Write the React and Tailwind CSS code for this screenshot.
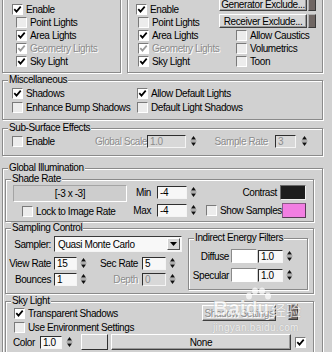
import React from "react";

const BG = "bg-[#d1d1d1]";

function Check({ checked = false, disabled = false }) {
  return (
    <span
      className={
        "flex h-[11px] w-[11px] shrink-0 items-center justify-center border border-t-[#7a7a7a] border-l-[#7a7a7a] border-b-white border-r-white " +
        (checked ? "bg-white" : "bg-[#ececec]")
      }
    >
      {checked && (
        <svg width="9" height="9" viewBox="0 0 9 9">
          <path
            d="M1.3 4.1 L3.5 6.6 L7.7 1.6"
            fill="none"
            stroke={disabled ? "#9a9a9a" : "#000"}
            strokeWidth="1.7"
          />
        </svg>
      )}
    </span>
  );
}

function CheckRow({ label, checked, disabled, className = "" }) {
  return (
    <div className={"flex items-center gap-[3px] whitespace-nowrap " + className}>
      <Check checked={checked} disabled={disabled} />
      <span className={disabled ? "text-[#8c8c8c] [text-shadow:1px_1px_0_#fff]" : ""}>{label}</span>
    </div>
  );
}

function Spinner({ className = "" }) {
  return (
    <svg width="7" height="14" viewBox="0 0 7 14" className={"shrink-0 " + className}>
      <path d="M3.5 2 L1 5.5 L6 5.5 Z" fill="#111" />
      <path d="M0.5 7 H6.5" stroke="#8a8a8a" strokeWidth="1" />
      <path d="M3.5 12 L1 8.5 L6 8.5 Z" fill="#111" />
    </svg>
  );
}

function Field({ value, className = "", disabled = false }) {
  return (
    <div
      className={
        "flex h-[13px] shrink-0 items-center overflow-hidden border border-t-[#2e2e2e] border-l-[#2e2e2e] border-b-[#f4f4f4] border-r-[#f4f4f4] pl-[2px] leading-[11px] " +
        (disabled ? "bg-[#d8d8d8] text-[#8c8c8c]" : "bg-[#f7f7f7]") +
        " " +
        className
      }
    >
      {value}
    </div>
  );
}

function Group({ label, className = "", children }) {
  return (
    <div
      className={
        "shrink-0 border border-[#8a8a8a] shadow-[inset_1px_1px_0_#fff,1px_1px_0_#fff] " + className
      }
    >
      {label && (
        <div className={"-mt-[7px] ml-[5px] h-[12px] w-fit whitespace-nowrap px-[1px] leading-[12px] " + BG}>
          {label}
        </div>
      )}
      {children}
    </div>
  );
}

function Button({ children, className = "", disabled = false }) {
  return (
    <div
      className={
        "flex shrink-0 items-center justify-center whitespace-nowrap border border-t-white border-l-white border-b-[#404040] border-r-[#404040] bg-[#d6d6d6] shadow-[inset_-1px_-1px_0_#9a9a9a] " +
        (disabled ? "text-[#8c8c8c] [text-shadow:1px_1px_0_#fff] " : "") +
        className
      }
    >
      {children}
    </div>
  );
}

function Bar({ className = "" }) {
  return (
    <div
      className={
        "shrink-0 border border-t-[#b0b0b0] border-l-[#b0b0b0] border-b-[#3a3a3a] border-r-[#3a3a3a] bg-[#6f6663] " +
        className
      }
    />
  );
}

export default function App() {
  return (
    <div className="relative flex h-[352px] w-[332px] flex-col overflow-hidden bg-[#d1d1d1] pl-[2px] font-['Liberation_Sans',Arial,sans-serif] text-[10px] leading-[13px] tracking-[-0.4px] text-black">
      {/* top two boxes */}
      <div className="-mt-[8px] flex h-[81px] w-[321px] shrink-0 gap-[6px]">
        <Group className="w-[119px] pt-[10px]">
          <CheckRow label="Enable" checked className="h-[13px] pl-[9px]" />
          <CheckRow label="Point Lights" className="h-[13px] pl-[13px]" />
          <CheckRow label="Area Lights" checked className="h-[13px] pl-[13px]" />
          <CheckRow label="Geometry Lights" checked disabled className="h-[13px] pl-[13px]" />
          <CheckRow label="Sky Light" checked className="h-[13px] pl-[13px]" />
        </Group>
        <Group className="flex w-[196px]">
          <div className="w-[91px] shrink-0 pt-[10px]">
            <CheckRow label="Enable" checked className="h-[13px] pl-[8px]" />
            <CheckRow label="Point Lights" className="h-[13px] pl-[10px]" />
            <CheckRow label="Area Lights" checked className="h-[13px] pl-[10px]" />
            <CheckRow label="Geometry Lights" checked disabled className="h-[13px] pl-[10px]" />
            <CheckRow label="Sky Light" checked className="h-[13px] pl-[10px]" />
          </div>
          <div className="flex flex-col pt-[4px]">
            <div className="flex gap-[1px]">
              <Button className="h-[14px] w-[88px]">Generator Exclude...</Button>
              <Bar className="h-[14px] w-[8px]" />
            </div>
            <div className="mt-[3px] flex gap-[1px]">
              <Button className="h-[14px] w-[88px]">Receiver Exclude...</Button>
              <Bar className="h-[14px] w-[8px]" />
            </div>
            <CheckRow label="Allow Caustics" className="mt-[1px] h-[13px] pl-[17px]" />
            <CheckRow label="Volumetrics" className="h-[13px] pl-[17px]" />
            <CheckRow label="Toon" className="h-[13px] pl-[17px]" />
          </div>
        </Group>
      </div>

      {/* Miscellaneous */}
      <Group label="Miscellaneous" className="mt-[7px] h-[40px] w-[321px]">
        <div className="grid grid-cols-[134px_1fr] grid-rows-[14px_14px]">
          <CheckRow label="Shadows" checked className="pl-[9px]" />
          <CheckRow label="Allow Default Lights" checked />
          <CheckRow label="Enhance Bump Shadows" className="pl-[9px]" />
          <CheckRow label="Default Light Shadows" />
        </div>
      </Group>

      {/* Sub-Surface Effects */}
      <Group label="Sub-Surface Effects" className="mt-[8px] h-[28px] w-[321px]">
        <div className="flex h-[14px] items-center pl-[9px]">
          <CheckRow label="Enable" className="w-[83px]" />
          <span className="w-[49px] whitespace-nowrap text-right text-[#8c8c8c] [text-shadow:1px_1px_0_#fff]">
            Global Scale
          </span>
          <Field value="1.0" disabled className="ml-[3px] w-[39px]" />
          <Spinner className="ml-[4px]" />
          <span className="w-[71px] whitespace-nowrap text-right text-[#8c8c8c] [text-shadow:1px_1px_0_#fff]">
            Sample Rate
          </span>
          <Field value="3" disabled className="ml-[7px] w-[21px]" />
          <Spinner className="ml-[5px]" />
        </div>
      </Group>

      {/* Global Illumination */}
      <Group label="Global Illumination" className="mt-[12px] h-[200px] w-[321px]">
        <div className="flex flex-col pl-[2px]">
          {/* Shade Rate */}
          <Group label="Shade Rate" className="mt-[5px] h-[43px] w-[309px]">
            <div className="flex pl-[7px]">
              <div className="flex w-[114px] shrink-0 flex-col">
                <div className="flex h-[17px] items-center justify-center border border-t-[#a4a4a4] border-l-[#a4a4a4] border-b-white border-r-white bg-[#cdcdcd]">
                  [-3 x -3]
                </div>
                <CheckRow label="Lock to Image Rate" className="mt-[2px] h-[14px] pl-[9px]" />
              </div>
              <div className="ml-[1px] flex shrink-0 flex-col gap-[4px]">
                <div className="flex h-[14px] items-center">
                  <span className="w-[23px] text-right">Min</span>
                  <Field value="-4" className="ml-[6px] w-[30px]" />
                  <Spinner className="ml-[3px]" />
                </div>
                <div className="flex h-[14px] items-center">
                  <span className="w-[23px] text-right">Max</span>
                  <Field value="-4" className="ml-[6px] w-[30px]" />
                  <Spinner className="ml-[3px]" />
                </div>
              </div>
              <div className="ml-[9px] flex w-[100px] shrink-0 flex-col gap-[3px]">
                <div className="flex h-[15px] items-center justify-end gap-[3px]">
                  <span>Contrast</span>
                  <div className="h-[15px] w-[26px] border border-t-[#6a6a6a] border-l-[#6a6a6a] border-b-[#f0f0f0] border-r-[#f0f0f0] bg-[#1d1d1d]" />
                </div>
                <div className="flex h-[15px] items-center justify-between">
                  <CheckRow label="Show Samples" />
                  <div className="h-[15px] w-[26px] border border-t-[#8a5a86] border-l-[#8a5a86] border-b-[#5a3a58] border-r-[#5a3a58] bg-[#f27ee2]" />
                </div>
              </div>
            </div>
          </Group>

          {/* Sampling Control */}
          <Group label="Sampling Control" className="mt-[6px] h-[66px] w-[309px]">
            <div className="flex">
              <div className="flex w-[182px] shrink-0 flex-col">
                <div className="mt-[2px] flex h-[16px] items-center">
                  <span className="w-[45px] text-right">Sampler:</span>
                  <div className="ml-[3px] flex h-[16px] w-[128px] items-center justify-between border border-t-[#3a3a3a] border-l-[#3a3a3a] border-b-[#f4f4f4] border-r-[#f4f4f4] bg-[#f8f8f8] pl-[3px] pr-[1px]">
                    <span className="whitespace-nowrap">Quasi Monte Carlo</span>
                    <div className="flex h-[12px] w-[13px] items-center justify-center border border-t-white border-l-white border-b-[#505050] border-r-[#505050] bg-[#d6d6d6]">
                      <svg width="7" height="4" viewBox="0 0 7 4">
                        <path d="M0 0 H7 L3.5 4 Z" fill="#000" />
                      </svg>
                    </div>
                  </div>
                </div>
                <div className="mt-[4px] flex h-[14px] items-center">
                  <span className="w-[45px] whitespace-nowrap text-right">View Rate</span>
                  <Field value="15" className="ml-[3px] w-[23px]" />
                  <Spinner className="ml-[3px]" />
                  <span className="w-[51px] whitespace-nowrap text-right">Sec Rate</span>
                  <Field value="5" className="ml-[4px] w-[24px]" />
                  <Spinner className="ml-[3px]" />
                </div>
                <div className="mt-[2px] flex h-[14px] items-center">
                  <span className="w-[45px] text-right">Bounces</span>
                  <Field value="1" className="ml-[3px] w-[23px]" />
                  <Spinner className="ml-[3px]" />
                  <span className="w-[51px] text-right text-[#8c8c8c] [text-shadow:1px_1px_0_#fff]">Depth</span>
                  <Field value="0" disabled className="ml-[4px] w-[24px]" />
                  <Spinner className="ml-[3px]" />
                </div>
              </div>
              <Group label="Indirect Energy Filters" className="mt-[4px] h-[52px] w-[120px]">
                <div className="mt-[5px] flex flex-col gap-[5px]">
                  <div className="flex h-[14px] items-center">
                    <span className="w-[40px] text-right">Diffuse</span>
                    <div className="ml-[2px] h-[14px] w-[26px] border border-t-[#8a8a8a] border-l-[#8a8a8a] border-b-white border-r-white bg-white" />
                    <Field value="1.0" className="ml-[1px] w-[25px]" />
                    <Spinner className="ml-[3px]" />
                  </div>
                  <div className="flex h-[14px] items-center">
                    <span className="w-[40px] text-right">Specular</span>
                    <div className="ml-[2px] h-[14px] w-[26px] border border-t-[#8a8a8a] border-l-[#8a8a8a] border-b-white border-r-white bg-white" />
                    <Field value="1.0" className="ml-[1px] w-[25px]" />
                    <Spinner className="ml-[3px]" />
                  </div>
                </div>
              </Group>
            </div>
          </Group>

          {/* Sky Light */}
          <Group label="Sky Light" className="mt-[7px] h-[60px] w-[309px]">
            <div className="flex items-start">
              <div className="flex w-[196px] shrink-0 flex-col pl-[8px]">
                <CheckRow label="Transparent Shadows" checked className="h-[13px]" />
                <CheckRow label="Use Environment Settings" className="mt-[1px] h-[13px]" />
              </div>
              <Button disabled className="-mt-[2px] h-[16px] w-[74px]">
                Shadow Settings
              </Button>
              <Bar className="-mt-[3px] ml-[12px] h-[16px] w-[10px]" />
            </div>
            <div className="flex h-[16px] items-center pl-[7px]">
              <span>Color</span>
              <Field value="1.0" className="ml-[5px] w-[22px]" />
              <Spinner className="ml-[4px]" />
              <div className="ml-[8px] h-[16px] w-[27px] shrink-0 border border-t-white border-l-white border-b-[#303030] border-r-[#303030] bg-[#d8d8d8]" />
              <Button className="ml-[3px] h-[16px] w-[180px]">None</Button>
              <span className="ml-[4px]">
                <Check checked />
              </span>
            </div>
          </Group>
        </div>
      </Group>

      {/* watermark overlay */}
      <div className="pointer-events-none absolute left-[213px] top-[296px] flex flex-col items-start tracking-normal text-white opacity-70 [text-shadow:0_0_1px_#888]">
        <div className="flex items-end">
          <span className="font-['Liberation_Sans',sans-serif] text-[21px] font-bold leading-[24px]">Bai</span>
          <span className="relative font-['Liberation_Sans',sans-serif] text-[19px] font-bold leading-[24px]">
            du
            <svg width="30" height="14" viewBox="0 0 30 14" className="absolute -top-[9px] left-[-3px]">
              <ellipse cx="6" cy="9" rx="3" ry="3.5" fill="#fff" />
              <ellipse cx="12" cy="4" rx="3" ry="3.5" fill="#fff" />
              <ellipse cx="19" cy="4" rx="3" ry="3.5" fill="#fff" />
              <ellipse cx="25" cy="9" rx="3" ry="3.5" fill="#fff" />
            </svg>
          </span>
          <span className="ml-[2px] font-['Noto_Sans_CJK_SC',sans-serif] text-[15px] leading-[20px]">经验</span>
        </div>
        <span className="mt-[3px] font-['Liberation_Sans',sans-serif] text-[10px] leading-[10px] tracking-[0.3px]">
          jingyan.baidu.com
        </span>
      </div>
    </div>
  );
}
